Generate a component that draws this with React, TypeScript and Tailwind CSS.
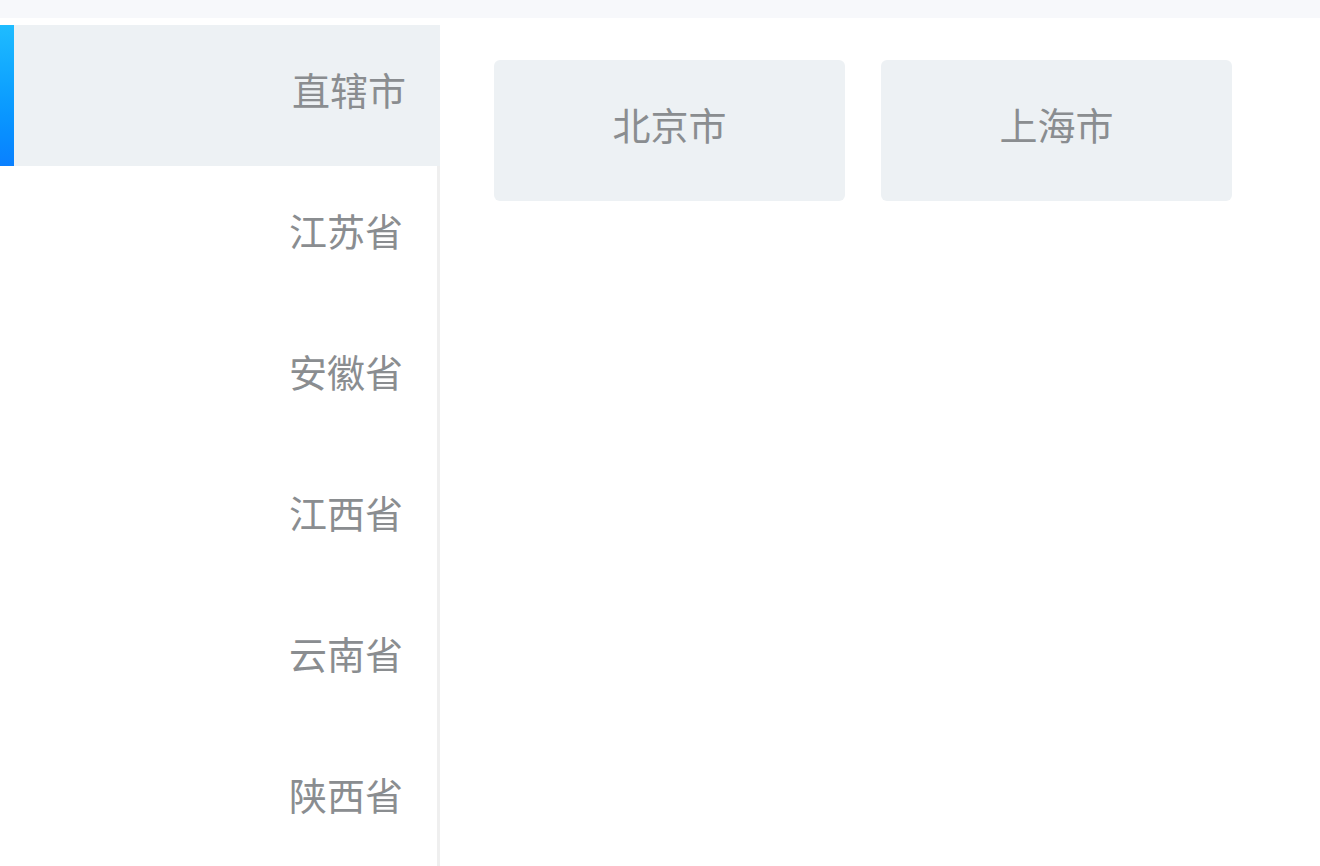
import * as React from "react"

const provinces = ["直辖市", "江苏省", "安徽省", "江西省", "云南省", "陕西省"]
const cities = ["北京市", "上海市"]

export default function App() {
  const [active, setActive] = React.useState(0)

  return (
    <div
      className="w-[1320px] h-[866px] overflow-hidden bg-white flex flex-col"
      style={{ fontFamily: '"Noto Sans CJK SC", "Noto Sans", sans-serif' }}
    >
      {/* 顶部浅色条 */}
      <div className="h-[18px] shrink-0 bg-[#f7f8fb]" />
      <div className="h-[7px] shrink-0" />

      <div className="flex flex-1 min-h-0">
        {/* 左侧省份列表 */}
        <div className="w-[440px] shrink-0 flex flex-col border-r-[3px] border-[#efefef]">
          {provinces.map((name, i) => (
            <div
              key={name}
              onClick={() => setActive(i)}
              className={`relative h-[141px] shrink-0 flex items-center justify-end pr-[34px] pb-[14px] text-[38px] text-[#8a8d90] ${
                i === active ? "bg-[#edf1f4] -mr-[3px]" : ""
              }`}
            >
              {i === active && (
                <div className="absolute left-0 top-0 bottom-0 w-[14px] bg-gradient-to-b from-[#1fbcff] to-[#0a80ff]" />
              )}
              {name}
            </div>
          ))}
        </div>

        {/* 右侧城市 */}
        <div className="flex-1 pl-[54px] pt-[35px]">
          <div className="flex gap-[36px]">
            {cities.map((c) => (
              <div
                key={c}
                className="w-[351px] h-[141px] rounded-[6px] bg-[#edf1f4] flex items-center justify-center pb-[14px] text-[38px] text-[#8a8d90]"
              >
                {c}
              </div>
            ))}
          </div>
        </div>
      </div>
    </div>
  )
}
